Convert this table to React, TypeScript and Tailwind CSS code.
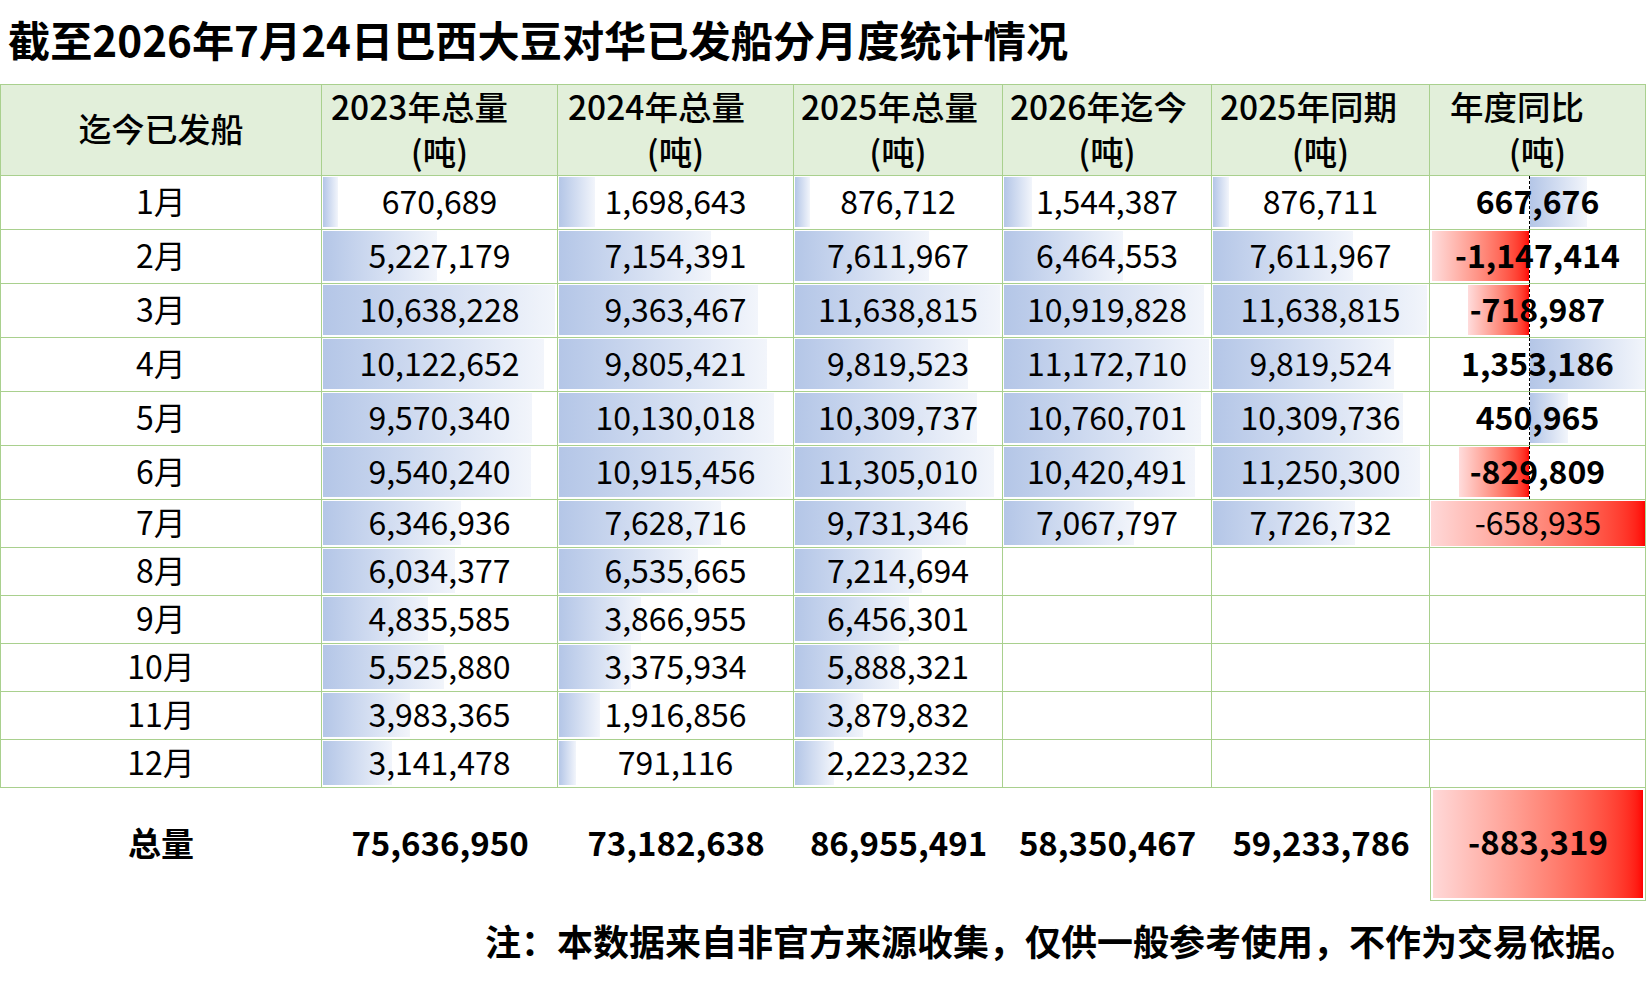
import React from 'react';

const months = ['1月', '2月', '3月', '4月', '5月', '6月', '7月', '8月', '9月', '10月', '11月', '12月'];

type Col = { title: string; pad: string; data: number[]; total: number };

const cols: Col[] = [
  {
    title: '2023年总量',
    pad: 'pl-[9px]',
    data: [670689, 5227179, 10638228, 10122652, 9570340, 9540240, 6346936, 6034377, 4835585, 5525880, 3983365, 3141478],
    total: 75636950,
  },
  {
    title: '2024年总量',
    pad: 'pl-[10px]',
    data: [1698643, 7154391, 9363467, 9805421, 10130018, 10915456, 7628716, 6535665, 3866955, 3375934, 1916856, 791116],
    total: 73182638,
  },
  {
    title: '2025年总量',
    pad: 'pl-[7px]',
    data: [876712, 7611967, 11638815, 9819523, 10309737, 11305010, 9731346, 7214694, 6456301, 5888321, 3879832, 2223232],
    total: 86955491,
  },
  {
    title: '2026年迄今',
    pad: 'pl-[7px]',
    data: [1544387, 6464553, 10919828, 11172710, 10760701, 10420491, 7067797],
    total: 58350467,
  },
  {
    title: '2025年同期',
    pad: 'pl-[8px]',
    data: [876711, 7611967, 11638815, 9819524, 10309736, 11250300, 7726732],
    total: 59233786,
  },
];

// 年度同比, the 7th row is a plain gradient fill, not a data bar
const diff = [667676, -1147414, -718987, 1353186, 450965, -829809];
const diffJul = -658935;
const diffTotal = -883319;

const fmt = (n: number) => n.toLocaleString('en-US');
const line = 'border-[#a9d08e]';
// Noto CJK sits a little low in its line box, lift the figures
const lift = '-translate-y-[3.5px]';

const BarCell = ({ value, max }: { value?: number; max: number }) => (
  <div className={`grid grid-rows-[minmax(0,1fr)] border-r border-b ${line}`}>
    {value !== undefined && (
      <div className="col-start-1 row-start-1 flex pl-[1px] pr-[2px] pt-[1px] pb-[2px]">
        <div
          className="h-full bg-linear-to-r from-[#b4c6e7] to-[#f2f5fb]"
          style={{ width: `${(value / max) * 100}%` }}
        />
      </div>
    )}
    <div className={`col-start-1 row-start-1 flex items-center justify-center ${lift}`}>
      {value !== undefined ? fmt(value) : ''}
    </div>
  </div>
);

const scale = 8.47e-5;

const DiffCell = ({ value }: { value: number }) => (
  <div className={`grid grid-rows-[minmax(0,1fr)] border-r border-b ${line}`}>
    <div className="col-start-1 row-start-1 flex">
      <div className="w-[99px] flex justify-end pt-[1px] pb-[2px]">
        {value < 0 && (
          <div
            className="h-full bg-linear-to-r from-[#ffdcdc] to-[#ff0000]"
            style={{ width: `${Math.round(-value * scale)}px` }}
          />
        )}
      </div>
      <div className="flex-1 flex border-l border-dashed border-black pt-[1px] pb-[2px]">
        {value > 0 && (
          <div
            className="h-full bg-linear-to-r from-[#b4c6e7] to-[#f2f5fb]"
            style={{ width: `${Math.round(value * scale)}px` }}
          />
        )}
      </div>
    </div>
    <div className={`col-start-1 row-start-1 flex items-center justify-center font-bold ${lift}`}>{fmt(value)}</div>
  </div>
);

export default function App() {
  return (
    <div className="w-[1647px] h-[991px] bg-white text-black font-['Noto_Sans_CJK_SC',sans-serif] overflow-hidden">
      <div className="h-[84px] pl-[8px] pb-[6px] text-[42.2px] leading-[78px] font-bold">
        截至2026年7月24日巴西大豆对华已发船分月度统计情况
      </div>

      <div className="grid grid-cols-[322px_236px_236px_209px_209px_218px_216px] grid-rows-[92px_repeat(6,54px)_repeat(6,48px)_113px] text-[32px] leading-[40px]">
        {/* header */}
        <div className={`flex items-center justify-center pb-[5px] bg-[#e2efda] border ${line} text-[33px] font-medium`}>
          迄今已发船
        </div>
        {[...cols.map((c) => ({ t: c.title, pad: c.pad })), { t: '年度同比', pad: 'pl-[20px]' }].map((h) => (
          <div
            key={h.t}
            className={`flex flex-col justify-center pb-[4px] bg-[#e2efda] border-t border-r border-b ${line} text-[33.5px] leading-[45px] font-medium`}
          >
            <div className={`${h.pad} whitespace-nowrap`}>{h.t}</div>
            <div className="text-center">(吨)</div>
          </div>
        ))}

        {/* months */}
        {months.map((m, i) => (
          <React.Fragment key={m}>
            <div className={`flex items-center justify-center border-l border-r border-b ${line}`}>
              <span className={lift}>{m}</span>
            </div>
            {cols.map((c) => (
              <BarCell key={c.title} value={c.data[i]} max={Math.max(...c.data)} />
            ))}
            {i < 6 && <DiffCell value={diff[i]} />}
            {i === 6 && (
              <div className={`border-r border-b ${line} pl-[1px] pt-[1px] pb-[1px]`}>
                <div className="h-full flex items-center justify-center bg-linear-to-r from-[#ffd8d8] to-[#ff0000]">
                  <span className="-translate-y-[3px]">{fmt(diffJul)}</span>
                </div>
              </div>
            )}
            {i > 6 && <div className={`border-r border-b ${line}`} />}
          </React.Fragment>
        ))}

        {/* totals */}
        <div className="flex items-center justify-center font-bold text-[33px]">
          <span className={lift}>总量</span>
        </div>
        {cols.map((c) => (
          <div key={c.title} className="flex items-center justify-center font-bold text-[33px]">
            <span className={lift}>{fmt(c.total)}</span>
          </div>
        ))}
        <div className={`border-l border-r border-b ${line} p-[2px]`}>
          <div className="h-full flex items-center justify-center font-bold text-[33px] bg-linear-to-r from-[#ffd8d8] to-[#ff0000]">
            <span className="-translate-y-[3px]">{fmt(diffTotal)}</span>
          </div>
        </div>
      </div>

      <div className="mt-[21px] pr-[10px] text-right text-[36px] leading-[36px] font-bold whitespace-nowrap">
        注：本数据来自非官方来源收集，仅供一般参考使用，不作为交易依据。
      </div>
    </div>
  );
}
